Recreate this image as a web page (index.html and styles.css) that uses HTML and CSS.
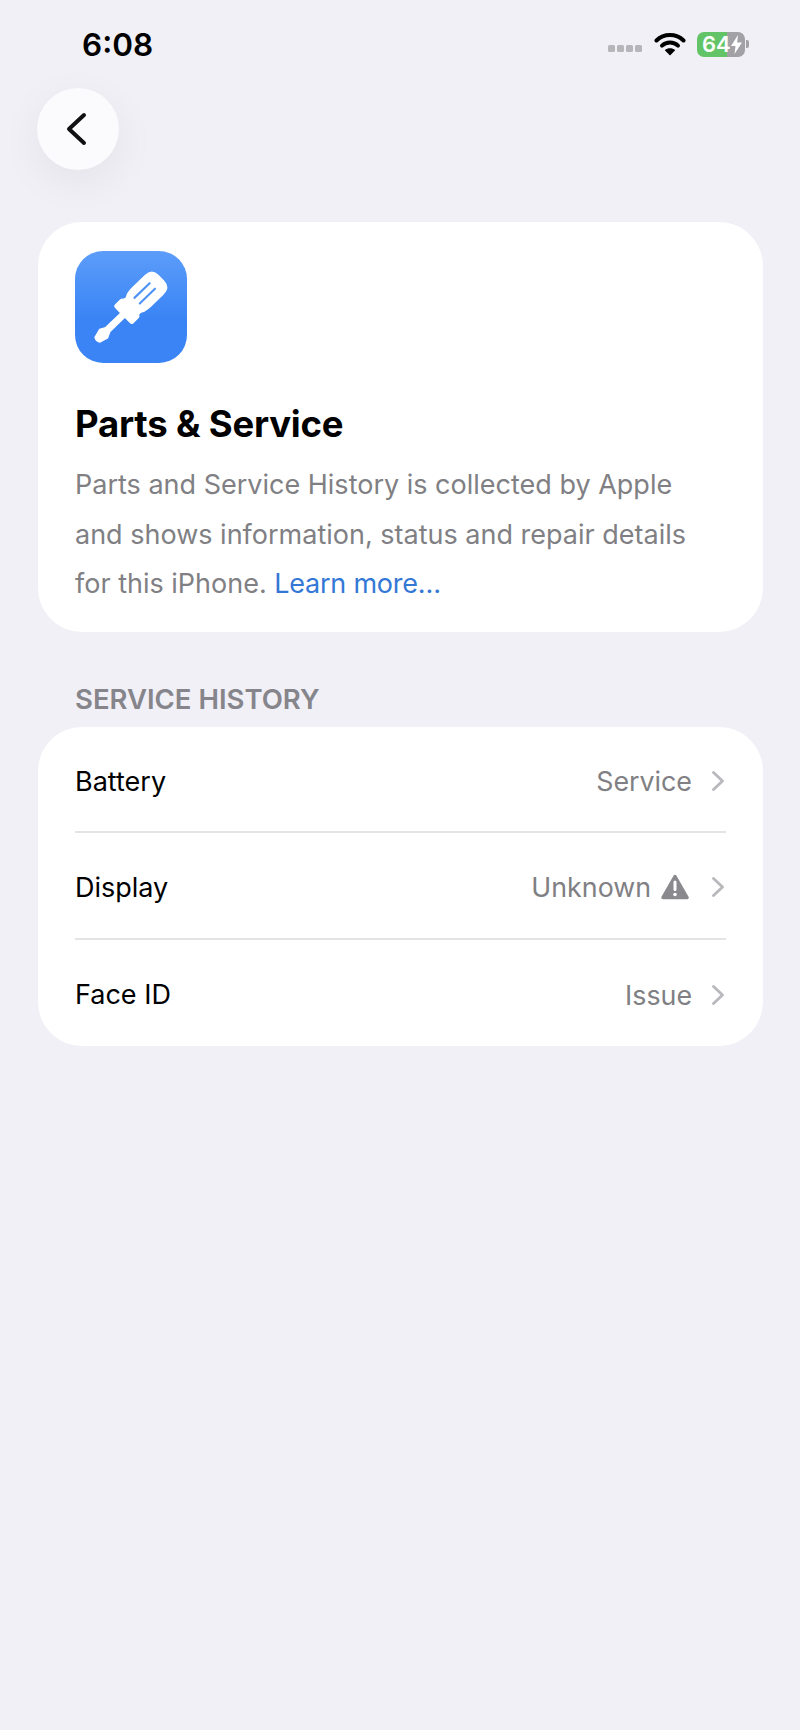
FILE: index.html
```html
<!DOCTYPE html>
<html lang="en">

<head>
    <meta charset="UTF-8">
    <meta name="viewport" content="width=device-width, initial-scale=1.0">
    <title>Parts &amp; Service</title>
    <link rel="stylesheet" href="styles.css">
</head>

<body>
    <header class="status-bar">
        <span class="clock">6:08</span>
        <div class="status-icons">
            <div class="signal">
                <i></i><i></i><i></i><i></i>
            </div>
            <svg class="wifi" width="32" height="24" viewBox="0 0 32 24">
                <path d="M2.5 8.5C9.9 1.3 22.1 1.3 29.5 8.5" fill="none" stroke="#000" stroke-width="4" stroke-linecap="round"/>
                <path d="M8 13.6C12.4 9.4 19.6 9.4 24 13.6" fill="none" stroke="#000" stroke-width="4" stroke-linecap="round"/>
                <path d="M16 23.5L10.8 18.2C13.7 15.6 18.3 15.6 21.2 18.2Z" fill="#000"/>
            </svg>
            <div class="battery">
                <div class="battery-body">
                    <span class="battery-level">64</span>
                    <svg class="bolt" width="11" height="19" viewBox="0 0 11 19">
                        <path d="M7 0L0 11H4.5L3.5 19L11 7.5H6.2Z" fill="#fff"/>
                    </svg>
                </div>
                <div class="battery-cap"></div>
            </div>
        </div>
    </header>

    <button class="back-button">
        <svg width="24" height="34" viewBox="0 0 24 34">
            <path d="M20 3L5 17L20 31" fill="none" stroke="#111" stroke-width="4" stroke-linecap="round" stroke-linejoin="round"/>
        </svg>
    </button>

    <main class="content">
        <section class="card intro">
            <div class="app-icon">
                <svg width="112" height="112" viewBox="0 0 112 112">
                    <!-- screwdriver drawn along x, then turned to the diagonal -->
                    <g transform="translate(21 90) rotate(-44) scale(0.96)">
                        <path d="M2 -3.500L11 -6L17 -3L39 -3L39 -11Q39 -13 41 -13L48 -13Q50 -13 51 -11L54 -10.500L58 -12.500Q62 -13.500 66 -13.500L84 -13.500Q94 -13.500 94 -4L94 4Q94 13.500 84 13.500L66 13.500Q62 13.500 58 12.500L54 10.500L51 11Q50 13 48 13L41 13Q39 13 39 11L39 3L17 3L11 6L2 3.500Q0 0 2 -3.500Z" fill="#fff" stroke="#fff" stroke-width="1.500" stroke-linejoin="round"/>
                        <path d="M60 -4.500H82M60 3.500H82" fill="none" stroke="#4f92f6" stroke-width="2.200" stroke-linecap="round"/>
                    </g>
                </svg>
            </div>
            <h1>Parts &amp; Service</h1>
            <p>Parts and Service History is collected by Apple and shows information, status and repair details for this iPhone. <a href="#">Learn more…</a></p>
        </section>

        <h2>SERVICE HISTORY</h2>
        <ul class="card history-list">
            <li class="history-item">
                <span class="item-name">Battery</span>
                <span class="item-status">Service</span>
                <svg class="chevron" width="12" height="20" viewBox="0 0 12 20">
                    <path d="M1.500 1.500L10.500 10L1.500 18.500" fill="none" stroke="#b9b9bd" stroke-width="2.800" stroke-linecap="round" stroke-linejoin="round"/>
                </svg>
            </li>
            <li class="history-item">
                <span class="item-name">Display</span>
                <span class="item-status">Unknown</span>
                <svg class="warning" width="28" height="26" viewBox="0 0 28 26">
                    <path d="M14 2.500L26 23.500H2Z" fill="#8a8a8e" stroke="#8a8a8e" stroke-width="3.500" stroke-linejoin="round"/>
                    <path d="M14 8V15.500" stroke="#fff" stroke-width="3" stroke-linecap="round"/>
                    <circle cx="14" cy="20.500" r="1.800" fill="#fff"/>
                </svg>
                <svg class="chevron" width="12" height="20" viewBox="0 0 12 20">
                    <path d="M1.500 1.500L10.500 10L1.500 18.500" fill="none" stroke="#b9b9bd" stroke-width="2.800" stroke-linecap="round" stroke-linejoin="round"/>
                </svg>
            </li>
            <li class="history-item">
                <span class="item-name">Face ID</span>
                <span class="item-status">Issue</span>
                <svg class="chevron" width="12" height="20" viewBox="0 0 12 20">
                    <path d="M1.500 1.500L10.500 10L1.500 18.500" fill="none" stroke="#b9b9bd" stroke-width="2.800" stroke-linecap="round" stroke-linejoin="round"/>
                </svg>
            </li>
        </ul>
    </main>
</body>

</html>
```

FILE: styles.css
```css
body {
    font-family: 'Inter', 'Liberation Sans', sans-serif;
    margin: 0;
    padding: 0;
    height: 1730px;
    overflow: hidden;
    background-color: #f0f0f6;
    color: #000;
}

.status-bar {
    display: flex;
    justify-content: space-between;
    align-items: center;
    height: 44px;
    padding: 22px 51px 0 82px;
}

.clock {
    font-size: 31.500px;
    font-weight: 600;
}

.status-icons {
    display: flex;
    align-items: center;
    gap: 11px;
}

.signal {
    display: flex;
    gap: 2px;
    margin: 8px 1px 0 0;
}

.signal i {
    width: 7px;
    height: 7px;
    border-radius: 1.500px;
    background-color: #b5b5ba;
}

.battery {
    display: flex;
    align-items: center;
    gap: 1px;
}

.battery-body {
    display: flex;
    align-items: center;
    width: 48px;
    height: 25px;
    border-radius: 7px;
    overflow: hidden;
    background: linear-gradient(to right, #62c466 0 63%, #a2a2a6 63%);
}

.battery-level {
    width: 34px;
    padding-left: 5px;
    box-sizing: border-box;
    font-size: 22px;
    font-weight: 600;
    color: #fff;
}

.battery-cap {
    width: 3px;
    height: 8px;
    border-radius: 0 2px 2px 0;
    background-color: #a2a2a6;
}

.back-button {
    display: flex;
    align-items: center;
    justify-content: center;
    width: 82px;
    height: 82px;
    margin: 22px 0 0 37px;
    padding: 0 4px 0 0;
    border: none;
    border-radius: 50%;
    background-color: #fbfbfe;
    box-shadow: 0 12px 44px rgba(0, 0, 0, 0.06);
}

.content {
    padding: 52px 37px 0 38px;
}

.card {
    background-color: #fff;
    border-radius: 44px;
}

.intro {
    height: 410px;
    box-sizing: border-box;
    padding: 29px 37px 0;
}

.app-icon {
    width: 112px;
    height: 112px;
    border-radius: 28px;
    background: linear-gradient(to bottom, #5c9dfa, #3a84f5 60%, #3a84f5);
}

.app-icon svg {
    display: block;
}

h1 {
    margin: 40px 0 0;
    font-size: 36.500px;
    line-height: 42px;
    font-weight: 700;
    letter-spacing: -0.2px;
}

.intro p {
    margin: 15px 0 0;
    font-size: 27px;
    line-height: 49.500px;
    color: #808084;
}

.intro a {
    color: #3478d6;
    text-decoration: none;
    letter-spacing: -0.25px;
}

h2 {
    margin: 45px 0 5px 37px;
    font-size: 27.500px;
    line-height: 45px;
    font-weight: 600;
    color: #85858b;
}

.history-list {
    list-style: none;
    margin: 0;
    padding: 0 37px;
}

.history-item {
    display: flex;
    align-items: center;
    box-sizing: border-box;
    height: 106.300px;
    padding: 4px 2px 0 0;
    font-size: 27px;
    border-bottom: 2px solid #e4e4e6;
}

.history-item:last-child {
    border-bottom: none;
}

.item-name {
    flex-grow: 1;
}

.item-status {
    font-size: 26.800px;
    color: #808084;
}

.warning {
    margin: 0 3px 0 10px;
}

.chevron {
    margin-left: 20px;
}
```
